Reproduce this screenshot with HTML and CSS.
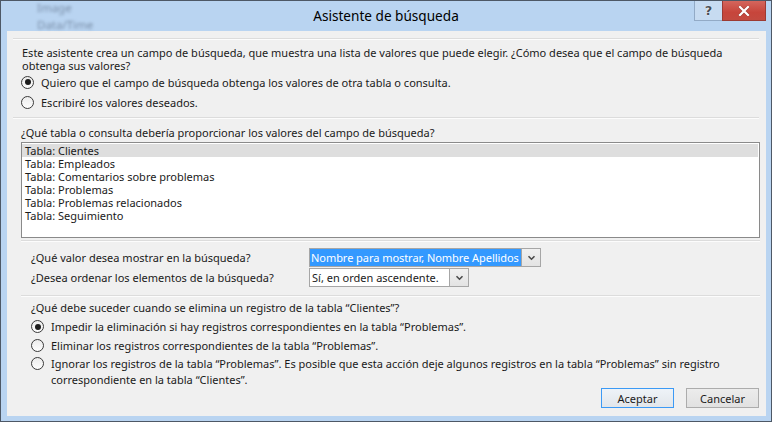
FILE: index.html
```html
<!DOCTYPE html>
<html lang="es">
<head>
<meta charset="utf-8">
<title>Asistente de búsqueda</title>
<link rel="stylesheet" href="styles.css">
</head>
<body>
<div class="window">
  <div class="titlebar">
    <div class="ghost">
      <span class="ghost-line">Image</span>
      <span class="ghost-line">Data/Time</span>
    </div>
    <div class="title">Asistente de búsqueda</div>
    <div class="caption-buttons">
      <div class="cap-btn help">?</div>
      <div class="cap-btn close">
        <svg width="12" height="10" viewBox="0 0 12 10"><path d="M2 1 L10 9 M10 1 L2 9" stroke="#5a1f1a" stroke-width="3.4" stroke-linecap="square" opacity="0.35"/><path d="M2 1 L10 9 M10 1 L2 9" stroke="#fff" stroke-width="2.2" stroke-linecap="square"/></svg>
      </div>
    </div>
  </div>
  <div class="content">
    <div class="sep"></div>
    <p class="intro">Este asistente crea un campo de búsqueda, que muestra una lista de valores que puede elegir. ¿Cómo desea que el campo de búsqueda obtenga sus valores?</p>
    <div class="radio-group top-radios">
      <div class="radio-row"><span class="radio checked"></span><span>Quiero que el campo de búsqueda obtenga los valores de otra tabla o consulta.</span></div>
      <div class="radio-row"><span class="radio"></span><span>Escribiré los valores deseados.</span></div>
    </div>
    <div class="sep sep-full"></div>
    <p class="question q-table">¿Qué tabla o consulta debería proporcionar los valores del campo de búsqueda?</p>
    <div class="listbox">
      <div class="list-item selected">Tabla: Clientes</div>
      <div class="list-item">Tabla: Empleados</div>
      <div class="list-item">Tabla: Comentarios sobre problemas</div>
      <div class="list-item">Tabla: Problemas</div>
      <div class="list-item">Tabla: Problemas relacionados</div>
      <div class="list-item">Tabla: Seguimiento</div>
    </div>
    <div class="sep sep-indent"></div>
    <div class="form-grid">
      <div class="form-label">¿Qué valor desea mostrar en la búsqueda?</div>
      <div class="combo combo-wide">
        <div class="combo-text highlighted">Nombre para mostrar, Nombre Apellidos</div>
        <div class="combo-btn"><svg width="9" height="6" viewBox="0 0 9 6"><path d="M1.5 1.2 L4.5 4.2 L7.5 1.2" fill="none" stroke="#4a4a4a" stroke-width="1.6"/></svg></div>
      </div>
      <div class="form-label">¿Desea ordenar los elementos de la búsqueda?</div>
      <div class="combo combo-narrow">
        <div class="combo-text">Sí, en orden ascendente.</div>
        <div class="combo-btn"><svg width="9" height="6" viewBox="0 0 9 6"><path d="M1.5 1.2 L4.5 4.2 L7.5 1.2" fill="none" stroke="#4a4a4a" stroke-width="1.6"/></svg></div>
      </div>
    </div>
    <div class="sep sep-indent sep-lower"></div>
    <div class="delete-section">
      <p class="question">¿Qué debe suceder cuando se elimina un registro de la tabla “Clientes”?</p>
      <div class="radio-group lower-radios">
        <div class="radio-row"><span class="radio checked"></span><span>Impedir la eliminación si hay registros correspondientes en la tabla “Problemas”.</span></div>
        <div class="radio-row"><span class="radio"></span><span>Eliminar los registros correspondientes de la tabla “Problemas”.</span></div>
        <div class="radio-row multi"><span class="radio"></span><span>Ignorar los registros de la tabla “Problemas”. Es posible que esta acción deje algunos registros en la tabla “Problemas” sin registro correspondiente en la tabla “Clientes”.</span></div>
      </div>
    </div>
    <div class="buttons">
      <button class="btn default">Aceptar</button>
      <button class="btn">Cancelar</button>
    </div>
  </div>
</div>
</body>
</html>
```

FILE: styles.css
```css
* { box-sizing: border-box; }
html, body { margin: 0; padding: 0; }
body {
  width: 772px;
  height: 422px;
  overflow: hidden;
  font-family: "Noto Sans", "Open Sans", sans-serif;
  font-size: 11px;
  color: #1a1a1a;
}
p { margin: 0; }

.window {
  width: 772px;
  height: 422px;
  border: 1px solid #4d5866;
  background: #b9d4f1;
  display: flex;
  flex-direction: column;
}

.titlebar {
  height: 30px;
  flex: none;
  display: grid;
  grid-template-columns: 1fr auto 1fr;
  align-items: start;
}
.ghost {
  display: flex;
  flex-direction: column;
  padding: 0 0 0 36px;
  filter: blur(1.4px);
  color: rgba(70, 85, 110, 0.55);
  font-size: 11.5px;
  line-height: 17px;
  margin-top: -2px;
}
.title {
  font-size: 13.6px;
  line-height: 29px;
  color: #000;
}
.caption-buttons {
  justify-self: end;
  display: flex;
  margin-right: 5px;
}
.cap-btn {
  height: 20px;
  display: flex;
  align-items: center;
  justify-content: center;
}
.help {
  width: 28px;
  background: #c7dbf1;
  border: 1px solid #92aac6;
  border-top: none;
  border-right: none;
  font-family: "DejaVu Sans", sans-serif;
  font-weight: bold;
  font-size: 13px;
  color: #4a4f57;
  text-shadow: 0 0 1px #fff, 0 0 1px #fff;
}
.close {
  width: 44px;
  background: linear-gradient(#d4665d, #c7453b 60%, #c34a40);
  border: 1px solid #9c3a33;
  border-top: none;
}

.content {
  flex: 1;
  margin: 0 5px 6px 6px;
  background: #f0f0f0;
  padding: 7px 7px 0 6px;
  display: flex;
  flex-direction: column;
}

.sep {
  height: 2px;
  border-top: 1px solid #dcdcdc;
  border-bottom: 1px solid #fcfcfc;
  flex: none;
}
.sep-indent {
  margin-left: 8px;
  margin-right: -1px;
  margin-top: 2px;
}

.intro {
  margin: 6px 0 0 9px;
  line-height: 13px;
}

.radio-group { display: flex; flex-direction: column; }
.radio-row {
  display: flex;
  align-items: center;
  gap: 7px;
  height: 20px;
}
.radio-row.multi {
  align-items: flex-start;
  height: auto;
  line-height: 16px;
  padding-top: 1px;
}
.radio-row.multi .radio { margin-top: 1px; }
.top-radios { margin: 0 0 0 8px; }

.radio {
  flex: none;
  width: 13px;
  height: 13px;
  border-radius: 50%;
  border: 1px solid #3a3a3a;
  background: linear-gradient(#ececec, #fdfdfd);
  display: flex;
  align-items: center;
  justify-content: center;
}
.radio.checked::after {
  content: "";
  width: 6px;
  height: 6px;
  border-radius: 50%;
  background: #1c1c1c;
}

.sep-full { margin-top: 5px; }

.question { line-height: 13px; }
.q-table { margin: 7px 0 0 8px; }

.listbox {
  margin: 3px -1px 0 8px;
  height: 96px;
  border: 1px solid #8a8a8a;
  background: #fff;
  padding: 1px 1px 0 0;
  flex: none;
}
.list-item {
  height: 13px;
  line-height: 13px;
  padding-left: 3px;
}
.list-item.selected { background: #dedede; }

.form-grid {
  margin: 6px 0 0 18px;
  display: grid;
  grid-template-columns: 278px auto;
  row-gap: 1px;
  align-items: center;
}
.combo {
  display: flex;
  height: 19px;
  border: 1px solid #a6a6a6;
  background: #fff;
}
.combo-wide { width: 232px; }
.combo-narrow { width: 160px; }
.combo-text {
  flex: 1;
  line-height: 17px;
  padding-left: 2px;
  white-space: nowrap;
  overflow: hidden;
}
.combo-text.highlighted {
  background: #3399ff;
  color: #fff;
  padding-left: 1px;
  letter-spacing: -0.05px;
}
.combo-btn {
  width: 19px;
  flex: none;
  border-left: 1px solid #a6a6a6;
  background: linear-gradient(#f0f0f0, #e3e3e3);
  display: flex;
  align-items: center;
  justify-content: center;
}

.sep-lower { margin-top: 8px; }

.delete-section {
  margin: 4px 0 0 18px;
}
.lower-radios { margin-top: 3px; }
.lower-radios .radio-row { height: 19px; }
.lower-radios .radio-row.multi { height: auto; }

.buttons {
  margin-top: auto;
  margin-bottom: 8px;
  display: flex;
  justify-content: flex-end;
  gap: 12px;
}
.btn {
  font-family: inherit;
  font-size: 11px;
  color: #1a1a1a;
  width: 73px;
  height: 20px;
  padding: 0;
  border: 1px solid #acacac;
  background: linear-gradient(#ececec, #e1e1e1);
}
.btn.default {
  border-color: #3c9af5;
  background: linear-gradient(#eef3f8, #e2e6ea);
}
```
